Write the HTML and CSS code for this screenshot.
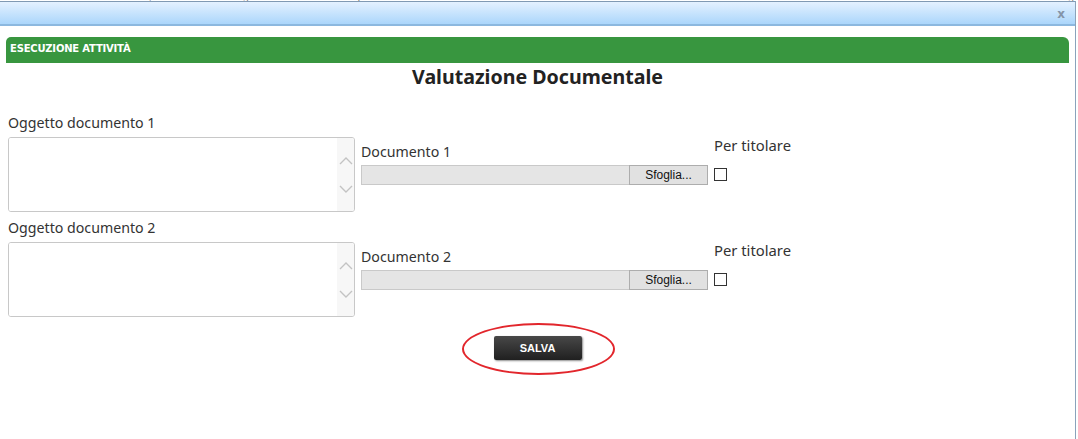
FILE: index.html
```html
<!DOCTYPE html>
<html lang="it">
<head>
    <meta charset="UTF-8">
    <title>Esecuzione attività</title>
    <link rel="stylesheet" href="styles.css">
</head>
<body>

<div class="page-behind">
    <span class="pb1">Documentazione, valutazione di congruità del caso e dei requisiti inseriti</span>
    <span class="pb2">In lavorazione</span>
    <span class="pb3">Protocollo 2014 / 00123</span>
    <span class="pb4">Dettaglio</span>
</div>

<div class="dialog">
    <div class="dialog-titlebar">
        <span class="dialog-close">x</span>
    </div>

    <div class="dialog-content">
        <div class="section-bar">ESECUZIONE ATTIVITÀ</div>
        <h1 class="form-title">Valutazione Documentale</h1>

        <div class="doc-row">
            <div class="col-object">
                <label>Oggetto documento 1</label>
                <div class="textbox">
                    <textarea></textarea>
                    <div class="scroll">
                        <svg width="14" height="10" viewBox="0 0 14 10"><path d="M1 8 L7 2 L13 8" fill="none" stroke="#c3c3c3" stroke-width="1.4"/></svg>
                        <svg width="14" height="10" viewBox="0 0 14 10"><path d="M1 2 L7 8 L13 2" fill="none" stroke="#c3c3c3" stroke-width="1.4"/></svg>
                    </div>
                </div>
            </div>
            <div class="col-file">
                <label>Documento 1</label>
                <div class="file-field">
                    <span class="file-path"></span>
                    <span class="file-btn">Sfoglia...</span>
                </div>
            </div>
            <div class="col-check">
                <label>Per titolare</label>
                <input type="checkbox" class="check">
            </div>
        </div>

        <div class="doc-row">
            <div class="col-object">
                <label>Oggetto documento 2</label>
                <div class="textbox">
                    <textarea></textarea>
                    <div class="scroll">
                        <svg width="14" height="10" viewBox="0 0 14 10"><path d="M1 8 L7 2 L13 8" fill="none" stroke="#c3c3c3" stroke-width="1.4"/></svg>
                        <svg width="14" height="10" viewBox="0 0 14 10"><path d="M1 2 L7 8 L13 2" fill="none" stroke="#c3c3c3" stroke-width="1.4"/></svg>
                    </div>
                </div>
            </div>
            <div class="col-file">
                <label>Documento 2</label>
                <div class="file-field">
                    <span class="file-path"></span>
                    <span class="file-btn">Sfoglia...</span>
                </div>
            </div>
            <div class="col-check">
                <label>Per titolare</label>
                <input type="checkbox" class="check">
            </div>
        </div>

        <div class="actions">
            <div class="save-wrap">
                <button class="btn-save">SALVA</button>
                <span class="highlight"></span>
            </div>
        </div>
    </div>
</div>

</body>
</html>
```

FILE: styles.css
```css
/* base */
body {
    margin: 0;
    padding: 0;
    background-color: #fff;
    font-family: "Noto Sans", Arial, sans-serif;
    color: #333;
    overflow: hidden;
}

/* strip of the page under the dialog */
.page-behind {
    height: 1px;
    overflow: hidden;
    display: flex;
    font-family: "Liberation Sans", Arial, sans-serif;
    font-size: 11px;
    line-height: 11px;
    color: #777;
    white-space: nowrap;
}
.page-behind span {
    margin-top: -9px;
}
.pb1 { margin-left: 66px; }
.pb2 { margin-left: 230px; }
.pb3 { margin-left: 140px; }
.pb4 { margin-left: 70px; }

/* dialog */
.dialog {
    width: 1075px;
    height: 438px;
    border-right: 1px solid #8aa3bb;
}
.dialog-titlebar {
    height: 22px;
    border-top: 1px solid #8099b3;
    border-bottom: 2px solid #8cb8df;
    background: linear-gradient(to bottom, #e4f1ff, #abd6fb);
    display: flex;
    justify-content: flex-end;
    align-items: center;
}
.dialog-close {
    font-family: "DejaVu Sans", Verdana, sans-serif;
    font-weight: bold;
    font-size: 12px;
    color: #8494a8;
    margin-right: 10px;
    margin-top: 1px;
}
.dialog-content {
    padding: 10px 6px 0 6px;
    border-top: 1px solid #fff;
}

.section-bar {
    height: 26px;
    line-height: 24px;
    background-color: #38963f;
    border-radius: 5px 6px 0 0;
    color: #fff;
    font-family: "DejaVu Sans", Verdana, sans-serif;
    font-weight: bold;
    font-size: 10px;
    letter-spacing: -0.2px;
    padding-left: 4px;
}

.form-title {
    margin: 0;
    padding: 1px 0 0 0;
    height: 49px;
    text-align: center;
    font-size: 19.6px;
    font-weight: bold;
    color: #222;
    line-height: 26px;
}

/* document rows */
.doc-row {
    display: flex;
    align-items: flex-start;
    padding-left: 2px;
    margin-bottom: 6px;
}
.doc-row label {
    display: block;
    font-size: 14.2px;
    line-height: 20px;
    color: #333;
}
.col-object {
    width: 347px;
}
.col-object label {
    margin-bottom: 4px;
}
.textbox {
    display: flex;
    height: 73px;
    border: 1px solid #c8c8c8;
    border-radius: 3px;
    overflow: hidden;
}
.textbox textarea {
    flex: 1;
    border: none;
    resize: none;
    outline: none;
    margin: 0;
}
.scroll {
    width: 17px;
    background-color: #f7f7f7;
    display: flex;
    flex-direction: column;
    justify-content: center;
    align-items: center;
    gap: 18px;
}

.col-file {
    width: 347px;
    margin-left: 6px;
    margin-top: 29px;
}
.col-file label {
    margin-bottom: 3px;
}
.file-field {
    display: flex;
    height: 20px;
    font-family: "Liberation Sans", Arial, sans-serif;
    font-size: 12px;
}
.file-path {
    flex: 1;
    background-color: #e5e5e5;
    border: 1px solid #c9c9c9;
    border-right: none;
}
.file-btn {
    width: 77px;
    background-color: #e1e1e1;
    border: 1px solid #adadad;
    text-align: center;
    line-height: 18px;
    color: #111;
}

.col-check {
    margin-left: 6px;
    margin-top: 22px;
}
.col-check label {
    margin-bottom: 13px;
    font-size: 14.8px;
}
.check {
    appearance: none;
    display: block;
    width: 13px;
    height: 13px;
    margin: 0;
    border: 1px solid #333;
    background: #fff;
}

/* save button */
.actions {
    display: flex;
    justify-content: center;
    padding-top: 12px;
}
.save-wrap {
    position: relative;
}
.btn-save {
    width: 88px;
    height: 24px;
    border: none;
    border-radius: 2px;
    background: linear-gradient(to bottom, #484848, #202020);
    box-shadow: 1px 1px 2px rgba(0, 0, 0, 0.45);
    color: #fff;
    font-family: "Liberation Sans", Arial, sans-serif;
    font-weight: bold;
    font-size: 11px;
    cursor: pointer;
}
.highlight {
    position: absolute;
    left: -32px;
    top: -12px;
    width: 149px;
    height: 48px;
    border: 2px solid #e2262c;
    border-radius: 50%;
    pointer-events: none;
}
```
